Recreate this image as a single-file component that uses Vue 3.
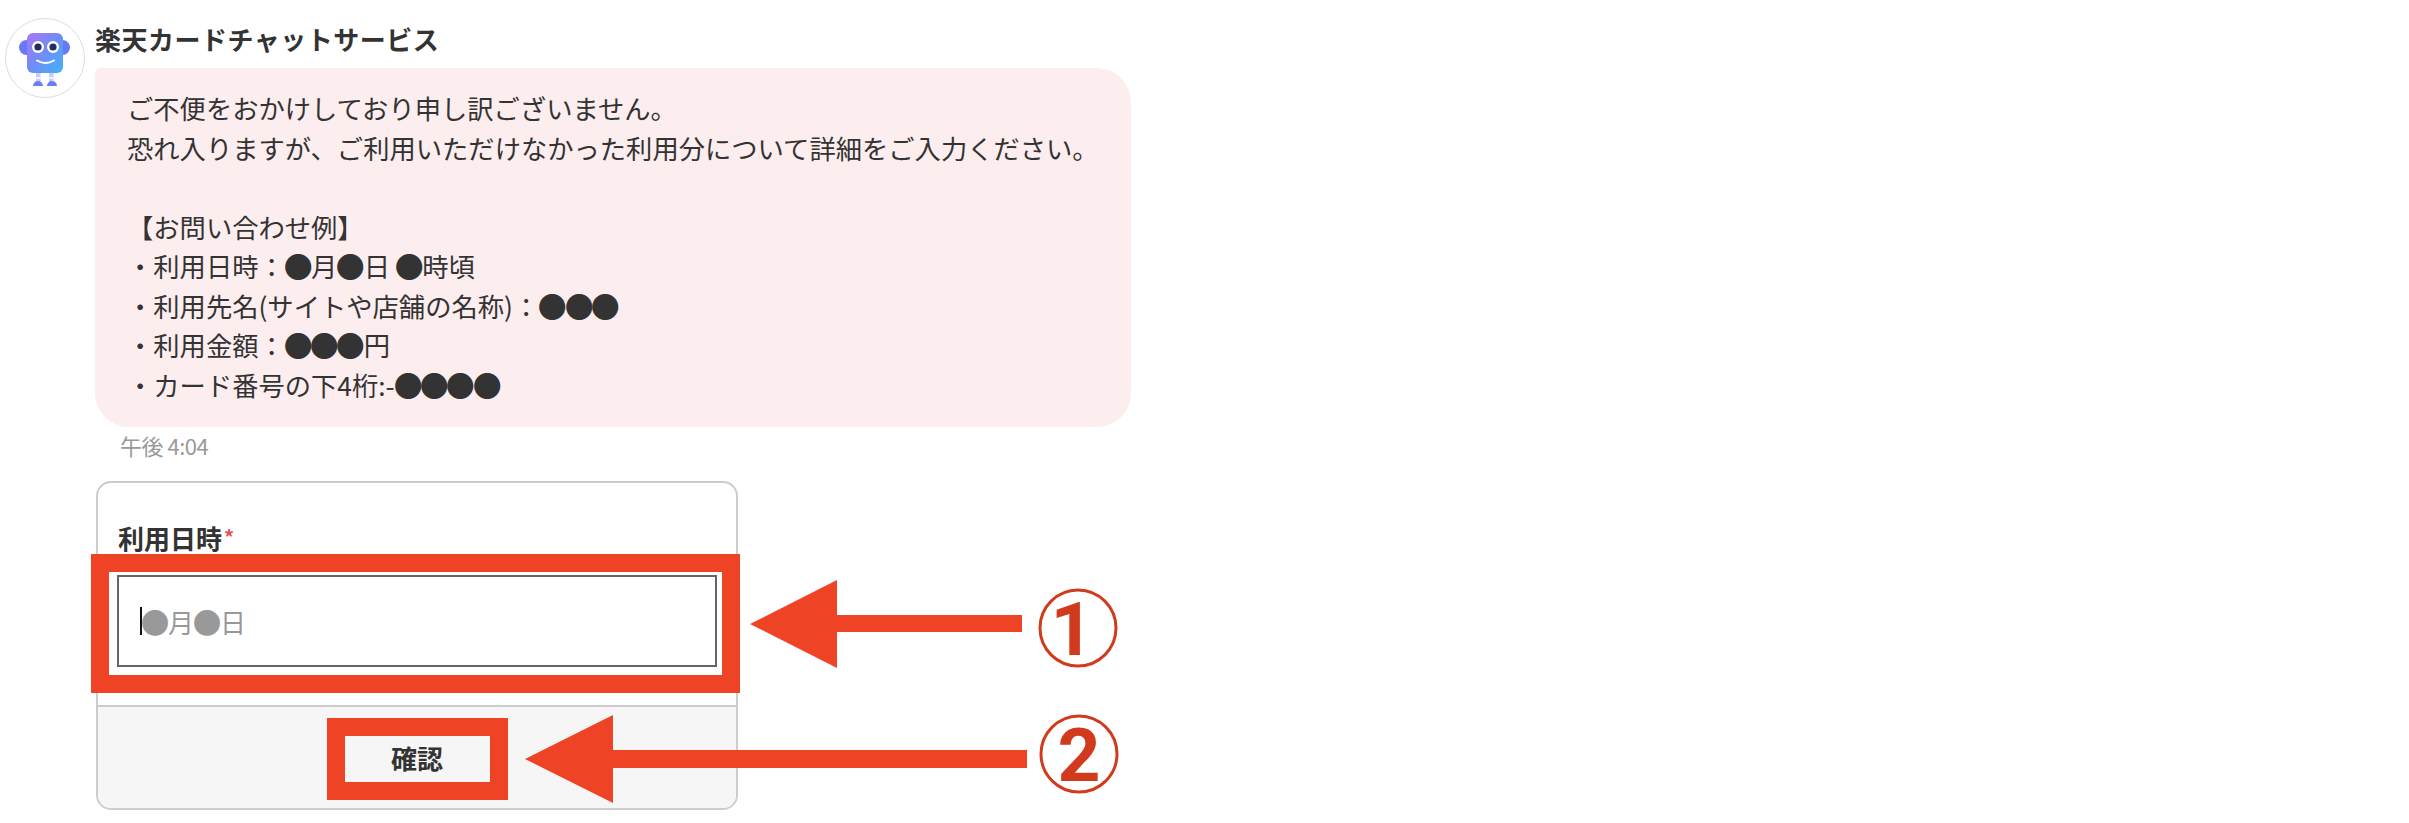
<script setup>
const rawLines = [
  'ご不便をおかけしており申し訳ございません。',
  '恐れ入りますが、ご利用いただけなかった利用分について詳細をご入力ください。',
  '\u00a0',
  '【お問い合わせ例】',
  '・利用日時：●月●日 ●時頃',
  '・利用先名(サイトや店舗の名称)：●●●',
  '・利用金額：●●●円',
  '・カード番号の下4桁:-●●●●',
]
const split = (s) => s.split(/(●)/).filter(Boolean)
const lines = rawLines.map(split)
const placeholder = split('●月●日')
</script>

<template>
  <div class="page">
    <div class="message">
      <div class="avatar">
        <svg class="robot" viewBox="0 0 78 78" width="78" height="78">
          <defs>
            <linearGradient id="bodyGrad" x1="0" y1="0" x2="1" y2="1">
              <stop offset="0" stop-color="#aa76f5" />
              <stop offset="0.5" stop-color="#6f8df8" />
              <stop offset="1" stop-color="#3db4fb" />
            </linearGradient>
          </defs>
          <rect x="13" y="21" width="20" height="15" rx="7.5" fill="#6878f7" />
          <rect x="44" y="21" width="20" height="15" rx="7.5" fill="#6878f7" />
          <rect x="30" y="54" width="4.5" height="9" fill="#c9cdfb" />
          <rect x="43" y="54" width="4.5" height="9" fill="#c9cdfb" />
          <rect x="30" y="58" width="4.5" height="2" fill="#eef0ff" />
          <rect x="43" y="58" width="4.5" height="2" fill="#eef0ff" />
          <path d="M27 67 a5 5 0 0 1 10 0 z" fill="#6c7ff5" />
          <path d="M41 67 a5 5 0 0 1 10 0 z" fill="#6c7ff5" />
          <rect x="21" y="14" width="36" height="40" rx="6" fill="url(#bodyGrad)" />
          <circle cx="32" cy="28" r="6" fill="#fff" />
          <circle cx="47" cy="28" r="6" fill="#fff" />
          <circle cx="32" cy="28" r="3.6" fill="#1d2f66" />
          <circle cx="47" cy="28" r="3.6" fill="#1d2f66" />
          <path d="M31 41.500 q8.500 5 17 0" fill="none" stroke="#fff" stroke-width="2" stroke-linecap="round" />
        </svg>
      </div>
      <div class="content">
        <div class="sender">楽天カードチャットサービス</div>
        <div class="bubble">
          <p v-for="(line, i) in lines" :key="i" class="line">
            <template v-for="(part, j) in line" :key="j"><span v-if="part === '●'" class="dot">●</span><template v-else>{{ part }}</template></template>
          </p>
        </div>
        <div class="time">午後 4:04</div>
        <div class="card">
          <div class="card-body">
            <div class="label">利用日時<span class="req">*</span></div>
            <div class="field">
              <span class="caret"></span>
              <span class="placeholder">
                <template v-for="(part, j) in placeholder" :key="j"><span v-if="part === '●'" class="dot">●</span><template v-else>{{ part }}</template></template>
              </span>
            </div>
          </div>
          <div class="card-foot">確認</div>
        </div>
      </div>
    </div>

    <svg class="overlay" width="2409" height="823" viewBox="0 0 2409 823">
      <g fill="none" stroke="#ee4325" stroke-width="18">
        <rect x="100" y="563" width="631" height="121" />
        <rect x="336" y="727" width="163" height="64" />
      </g>
      <g fill="#ee4325">
        <polygon points="750,624 837,580 837,615 1022,615 1022,632 837,632 837,668" />
        <polygon points="525,759 613,715 613,750 1027,750 1027,768 613,768 613,803" />
      </g>
      <g fill="none" stroke="#d23a1e" stroke-width="3">
        <circle cx="1078" cy="628" r="38" />
        <circle cx="1079" cy="754" r="38" />
      </g>
      <g class="digit" fill="#d23a1e" text-anchor="middle">
        <text x="1072" y="655">1</text>
        <text x="1079" y="781">2</text>
      </g>
    </svg>
  </div>
</template>

<style>
html, body { margin: 0; background: #fff; }
</style>

<style scoped>
.page {
  position: relative;
  width: 2409px;
  height: 823px;
  overflow: hidden;
  background: #fff;
  color: #333;
  font-family: "Noto Sans CJK JP", "Noto Sans", sans-serif;
}
.message {
  display: flex;
  gap: 10px;
  padding: 18px 0 0 5px;
}
.avatar {
  width: 78px;
  height: 78px;
  flex: none;
  border: 1px solid #ddd;
  border-radius: 50%;
}
.robot { display: block; }
.content { width: 1036px; }
.sender {
  height: 44px;
  margin-bottom: 6px;
  line-height: 42px;
  font-size: 26px;
  font-weight: 700;
  letter-spacing: 0.5px;
}
.bubble {
  box-sizing: border-box;
  height: 359px;
  padding: 20px 32px;
  background: #fcedee;
  border-radius: 5px 34px 34px 34px;
}
.line {
  margin: 0;
  font-size: 26.3px;
  line-height: 39.5px;
  white-space: pre;
}
.dot {
  display: inline-block;
  transform: scale(1.1);
}
.time {
  height: 36px;
  margin-left: 25px;
  line-height: 36px;
  font-size: 22px;
  letter-spacing: -0.5px;
  color: #999;
}
.card {
  box-sizing: border-box;
  width: 642px;
  height: 329px;
  margin: 18px 0 0 1px;
  border: 2px solid #ccc;
  border-radius: 15px;
  overflow: hidden;
  display: flex;
  flex-direction: column;
}
.card-body {
  height: 224px;
  box-sizing: border-box;
  padding: 36px 19px 0;
  border-bottom: 2px solid #ccc;
}
.label {
  height: 36px;
  margin: 0 0 20px 1px;
  line-height: 36px;
  font-size: 26px;
  font-weight: 700;
}
.req {
  color: #e25050;
  font-size: 20px;
  vertical-align: 4px;
  margin-left: 2px;
}
.field {
  box-sizing: border-box;
  width: 600px;
  height: 92px;
  border: 2px solid #666;
  padding-left: 21px;
  display: flex;
  align-items: center;
  background: #fff;
}
.caret {
  width: 2px;
  height: 28px;
  background: #111;
  flex: none;
}
.placeholder {
  font-size: 26px;
  color: #999;
}
.card-foot {
  flex: 1;
  display: flex;
  align-items: center;
  justify-content: center;
  background: #f6f6f6;
  font-size: 26px;
  font-weight: 700;
}
.overlay {
  position: absolute;
  left: 0;
  top: 0;
  pointer-events: none;
}
.digit {
  font-family: Roboto, "Liberation Sans", sans-serif;
  font-weight: 700;
  font-size: 75px;
}
</style>
